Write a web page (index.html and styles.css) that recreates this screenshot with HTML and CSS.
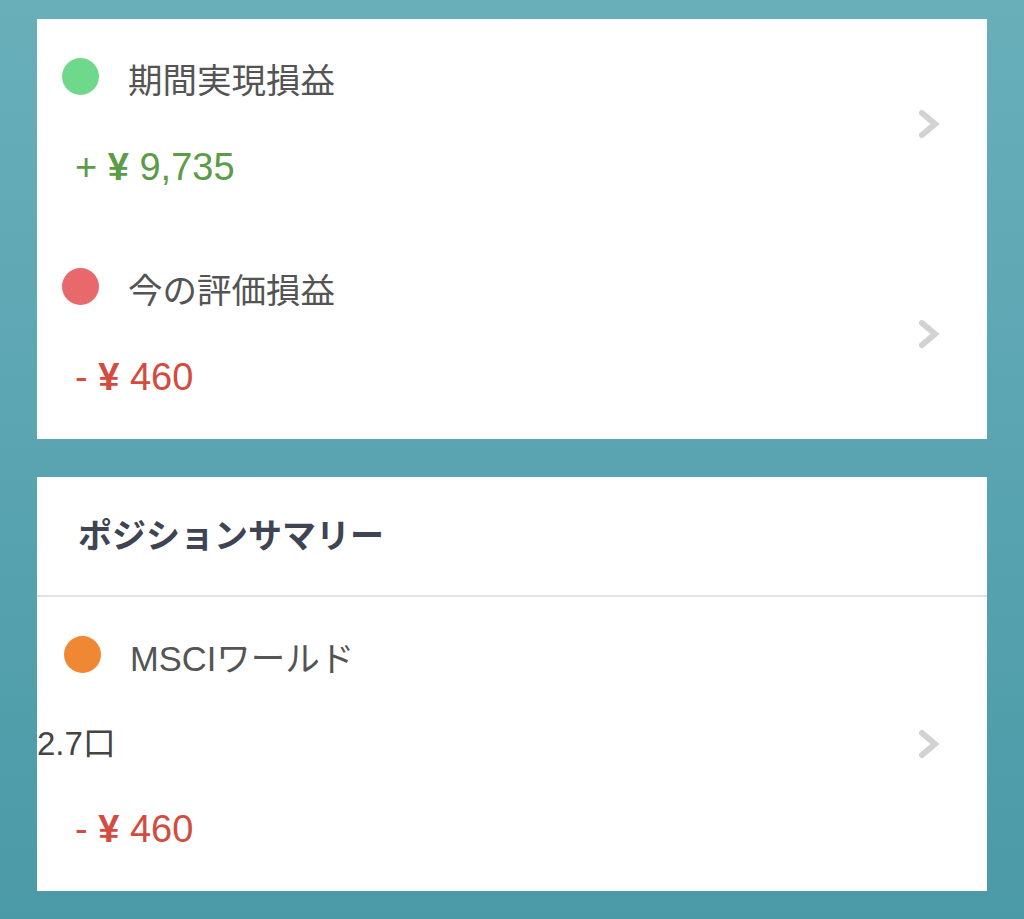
FILE: index.html
```html
<!DOCTYPE html>
<html lang="ja">
<head>
<meta charset="utf-8">
<title>損益</title>
<link rel="stylesheet" href="styles.css">
</head>
<body>
<main class="page">
  <section class="card">
    <div class="row">
      <div class="row-body">
        <div class="title-line"><span class="dot green"></span><span class="label">期間実現損益</span></div>
        <div class="amount plus">+ <span class="yen">¥</span> 9,735</div>
      </div>
      <svg class="chev" viewBox="0 0 22 30" width="22" height="30"><polyline points="4,4 17,15 4,26" /></svg>
    </div>
    <div class="row">
      <div class="row-body">
        <div class="title-line"><span class="dot red"></span><span class="label">今の評価損益</span></div>
        <div class="amount minus">- <span class="yen">¥</span> 460</div>
      </div>
      <svg class="chev" viewBox="0 0 22 30" width="22" height="30"><polyline points="4,4 17,15 4,26" /></svg>
    </div>
  </section>

  <section class="card">
    <h2 class="card-head">ポジションサマリー</h2>
    <div class="row row-tall">
      <div class="row-body">
        <div class="title-line pos"><span class="dot orange"></span><span class="label">MSCIワールド</span></div>
        <div class="qty">2.7口</div>
        <div class="amount minus">- <span class="yen">¥</span> 460</div>
      </div>
      <svg class="chev" viewBox="0 0 22 30" width="22" height="30"><polyline points="4,4 17,15 4,26" /></svg>
    </div>
  </section>
</main>
</body>
</html>
```

FILE: styles.css
```css
html, body {
  margin: 0;
  padding: 0;
  height: 100%;
}
body {
  background: linear-gradient(180deg, #68afba 0%, #5aa4b1 50%, #4b9aa7 100%);
  font-family: "Liberation Sans", "Noto Sans CJK JP", sans-serif;
}
.page {
  display: flex;
  flex-direction: column;
  gap: 38px;
  padding: 19px 37px 0 37px;
}
.card {
  background: #ffffff;
}
.row {
  display: flex;
  align-items: center;
  height: 210px;
}
.row-tall {
  height: 294px;
}
.row-body {
  flex: 1;
  display: flex;
  flex-direction: column;
}
.title-line {
  display: flex;
  align-items: center;
  height: 50px;
  padding-left: 25px;
}
.title-line.pos {
  padding-left: 27px;
}
.dot {
  width: 37px;
  height: 37px;
  border-radius: 50%;
  margin-bottom: 10px;
  flex: none;
}
.green { background: #6ed98b; }
.red { background: #e9686b; }
.orange { background: #ef8733; }
.label {
  margin-left: 29px;
  font-size: 34.5px;
  color: #545454;
  line-height: 50px;
}
.amount {
  height: 50px;
  line-height: 50px;
  margin-top: 36px;
  padding-left: 38px;
  font-size: 38px;
}
.yen {
  font-weight: bold;
}
.row-tall .amount {
  margin-top: 35px;
}
.plus { color: #5c9b47; }
.minus { color: #d44b40; }
.qty {
  height: 50px;
  line-height: 50px;
  margin-top: 35px;
  font-size: 33px;
  color: #444444;
}
.chev {
  flex: none;
  margin-right: 47px;
  fill: none;
  stroke: #d2d2d2;
  stroke-width: 6;
  stroke-linecap: round;
  stroke-linejoin: miter;
}
.card-head {
  margin: 0;
  height: 118px;
  line-height: 118px;
  padding-left: 41px;
  font-size: 34px;
  font-weight: bold;
  color: #3e4453;
  border-bottom: 2px solid #e3e3e3;
}
```
